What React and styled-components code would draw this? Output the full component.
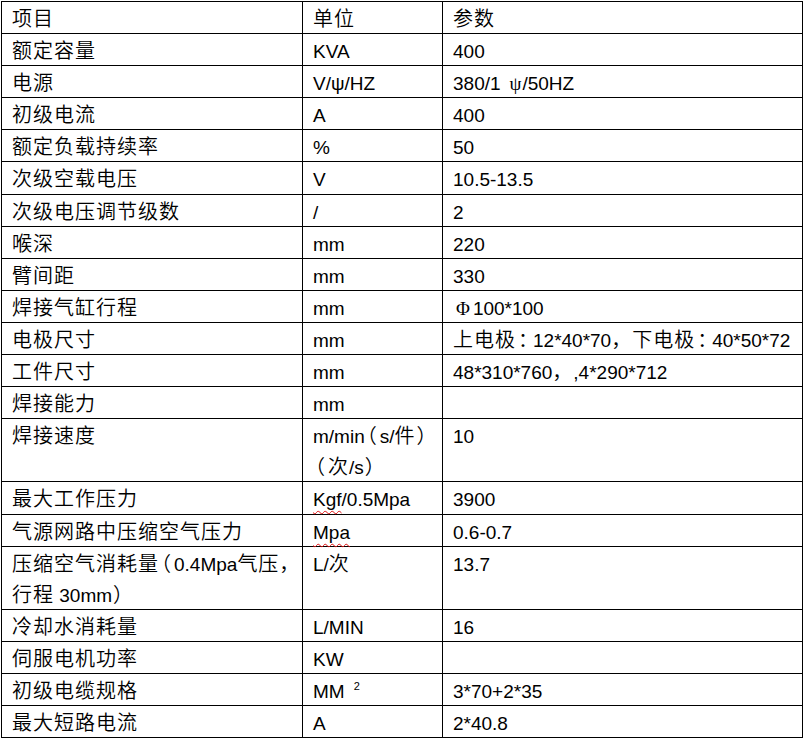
import React from "react";
import styled, { createGlobalStyle } from "styled-components";

const GlobalStyle = createGlobalStyle`
  html, body { margin: 0; padding: 0; background: #ffffff; }
`;

const Sheet = styled.table`
  border-collapse: collapse;
  table-layout: fixed;
  width: 801px;
  margin: 1px 0 0 1px;
  font-family: "Noto Sans CJK SC", sans-serif;
  font-weight: 350;
  font-size: 20px;
  line-height: 31.1px;
  color: #000000;
`;

const Col = styled.col`
  width: ${(p) => p.$w}px;
`;

const Cell = styled.td`
  border: 1px solid #000000;
  padding: 0 10px;
  vertical-align: top;
  white-space: nowrap;
  overflow: visible;
`;

const Han = styled.span`
  letter-spacing: 1px;
`;

/* fullwidth punctuation rendered half-width, then spaced like the reference */
const Punct = styled.span`
  font-feature-settings: "halt" 1;
  margin-left: ${(p) => p.$pre}px;
  letter-spacing: ${(p) => p.$post}px;
`;

const Latin = styled.span`
  font-family: "Liberation Sans", Arial, sans-serif;
  font-weight: 400;
  font-size: 19px;
  line-height: 1;
`;

const Wavy = styled(Latin)`
  text-decoration: underline wavy #e01010;
  text-decoration-thickness: 1px;
  text-underline-offset: 4px;
`;

const Sym = styled.span`
  font-family: "Liberation Serif", "DejaVu Serif", serif;
  font-weight: 400;
  font-size: ${(p) => p.$size || 19}px;
  line-height: 1;
  margin-left: ${(p) => p.$before || 0}px;
  margin-right: ${(p) => p.$after || 0}px;
`;

const Sup = styled.span`
  font-family: "Liberation Sans", Arial, sans-serif;
  font-weight: 400;
  font-size: 11px;
  line-height: 1;
  vertical-align: 8px;
  margin-left: 9px;
`;

const PUNCT = {
  "\uff08": { pre: 2, post: 3 },
  "\uff09": { pre: 1, post: 3 },
  "\uff1a": { pre: 2, post: 5 },
};
const HAN_RE = /[\u3400-\u9fff\uff0c]/;

function classify(ch) {
  if (PUNCT[ch]) return "p";
  if (HAN_RE.test(ch)) return "h";
  return "l";
}

function T({ children }) {
  const text = String(children);
  const runs = [];
  for (const ch of text) {
    const c = classify(ch);
    const last = runs[runs.length - 1];
    if (last && last.c === c && c !== "p") last.s += ch;
    else runs.push({ c, s: ch });
  }
  return runs.map((r, i) => {
    if (r.c === "h") return <Han key={i}>{r.s}</Han>;
    if (r.c === "p")
      return (
        <Punct key={i} $pre={PUNCT[r.s].pre} $post={PUNCT[r.s].post}>
          {r.s}
        </Punct>
      );
    return <Latin key={i}>{r.s}</Latin>;
  });
}

const rows = [
  ["项目", "单位", "参数"],
  ["额定容量", "KVA", "400"],
  [
    "电源",
    "V/ψ/HZ",
    <>
      <T>380/1</T>
      <Sym $before={9} $after={1}>ψ</Sym>
      <T>/50HZ</T>
    </>,
  ],
  ["初级电流", "A", "400"],
  ["额定负载持续率", "%", "50"],
  ["次级空载电压", "V", "10.5-13.5"],
  ["次级电压调节级数", "/", "2"],
  ["喉深", "mm", "220"],
  ["臂间距", "mm", "330"],
  [
    "焊接气缸行程",
    "mm",
    <>
      <Sym $size={19} $before={3} $after={3}>Φ</Sym>
      <T>100*100</T>
    </>,
  ],
  ["电极尺寸", "mm", "上电极：12*40*70，下电极：40*50*72"],
  ["工件尺寸", "mm", "48*310*760，,4*290*712"],
  ["焊接能力", "mm", ""],
  [
    "焊接速度",
    <>
      <T>m/min（s/件）</T>
      <br />
      <T>（次/s）</T>
    </>,
    "10",
  ],
  [
    "最大工作压力",
    <>
      <Wavy>Kgf</Wavy>
      <T>/0.5Mpa</T>
    </>,
    "3900",
  ],
  ["气源网路中压缩空气压力", <Wavy>Mpa</Wavy>, "0.6-0.7"],
  [
    <>
      <T>压缩空气消耗量（0.4Mpa气压，</T>
      <br />
      <T>行程 30mm）</T>
    </>,
    "L/次",
    "13.7",
  ],
  ["冷却水消耗量", "L/MIN", "16"],
  ["伺服电机功率", "KW", ""],
  [
    "初级电缆规格",
    <>
      <T>MM</T>
      <Sup>2</Sup>
    </>,
    "3*70+2*35",
  ],
  ["最大短路电流", "A", "2*40.8"],
];

function Content({ value }) {
  if (typeof value === "string") return <T>{value}</T>;
  return value;
}

export default function App() {
  return (
    <>
      <GlobalStyle />
      <Sheet>
        <colgroup>
          <Col $w={301} />
          <Col $w={140} />
          <Col $w={360} />
        </colgroup>
        <tbody>
          {rows.map((r, i) => (
            <tr key={i}>
              {r.map((c, j) => (
                <Cell key={j}>
                  <Content value={c} />
                </Cell>
              ))}
            </tr>
          ))}
        </tbody>
      </Sheet>
    </>
  );
}
